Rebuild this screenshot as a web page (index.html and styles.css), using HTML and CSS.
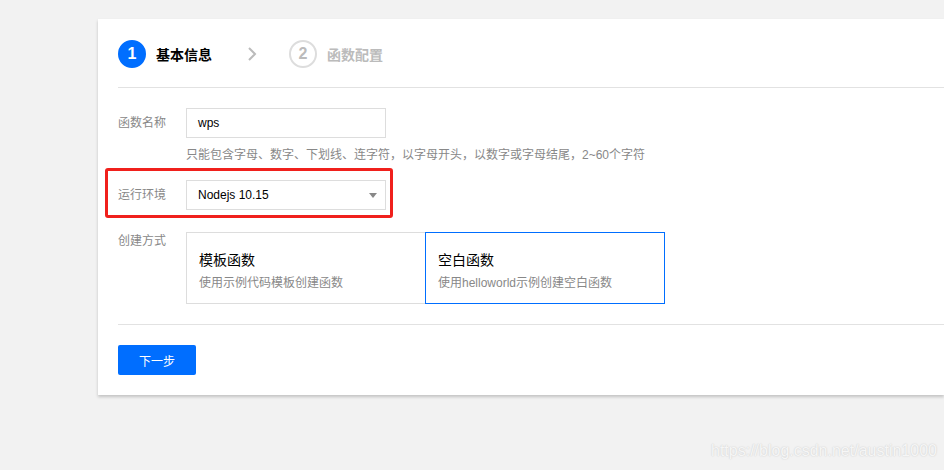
FILE: index.html
```html
<!DOCTYPE html>
<html lang="zh">
<head>
<meta charset="utf-8">
<link rel="stylesheet" href="styles.css">
</head>
<body>
<div class="page">
  <div class="panel">
    <div class="steps">
      <div class="step active"><span class="num">1</span><span class="step-text">基本信息</span></div>
      <svg class="chev" width="10" height="16" viewBox="0 0 10 16"><path d="M2 2 L8 8 L2 14" fill="none" stroke="#bbb" stroke-width="2"/></svg>
      <div class="step"><span class="num">2</span><span class="step-text">函数配置</span></div>
    </div>
    <div class="divider"></div>
    <div class="form">
      <div class="row">
        <div class="label">函数名称</div>
        <div class="field">
          <div class="input">wps</div>
          <div class="hint">只能包含字母、数字、下划线、连字符，以字母开头，以数字或字母结尾，2~60个字符</div>
        </div>
      </div>
      <div class="row row-env">
        <div class="label">运行环境</div>
        <div class="field">
          <div class="input select">Nodejs 10.15<span class="arrow"></span></div>
        </div>
        <div class="mark"></div>
      </div>
      <div class="row row-mode">
        <div class="label label-top">创建方式</div>
        <div class="field">
          <div class="options">
            <div class="option">
              <div class="opt-title">模板函数</div>
              <div class="opt-desc">使用示例代码模板创建函数</div>
            </div>
            <div class="option selected">
              <div class="opt-title">空白函数</div>
              <div class="opt-desc">使用helloworld示例创建空白函数</div>
            </div>
          </div>
        </div>
      </div>
    </div>
    <div class="divider divider-bottom"></div>
    <button class="btn">下一步</button>
  </div>
  <div class="watermark">https://blog.csdn.net/austin1000</div>
</div>
</body>
</html>
```
FILE: styles.css
```css
html, body {
  margin: 0;
  padding: 0;
  background: #f2f2f2;
  overflow: hidden;
}
body {
  width: 944px;
  height: 470px;
  font-family: "Liberation Sans", "Noto Sans CJK SC", sans-serif;
  font-size: 12px;
  color: #000;
}
.page {
  position: relative;
  width: 944px;
  height: 470px;
  padding-top: 19px;
  box-sizing: border-box;
  overflow: hidden;
}
.panel {
  margin-left: 98px;
  background: #fff;
  padding: 21px 0 20px 20px;
  box-sizing: border-box;
  box-shadow: 0 2px 3px rgba(0, 0, 0, 0.2);
}
.steps {
  display: flex;
  align-items: center;
  height: 28px;
}
.step {
  display: flex;
  align-items: center;
}
.num {
  width: 28px;
  height: 28px;
  border-radius: 50%;
  box-sizing: border-box;
  border: 2px solid #ddd;
  color: #bbb;
  font-weight: bold;
  font-size: 16px;
  display: flex;
  align-items: center;
  justify-content: center;
}
.step.active .num {
  background: #006eff;
  border-color: #006eff;
  color: #fff;
}
.step-text {
  margin-left: 10px;
  font-size: 14px;
  font-weight: bold;
  color: #bbb;
}
.step.active .step-text {
  color: #000;
}
.chev {
  margin: 0 32px 0 35px;
}
.divider {
  height: 1px;
  background: #e2e2e2;
  margin: 19px 0 20px 0;
}
.divider-bottom {
  margin-top: 20px;
  margin-bottom: 20px;
}
.form {
  display: flex;
  flex-direction: column;
}
.row {
  display: flex;
  position: relative;
}
.row-env {
  margin-top: 16px;
}
.row-mode {
  margin-top: 22px;
}
.label {
  width: 68px;
  color: #888;
  line-height: 30px;
  flex: none;
}
.label-top {
  line-height: 18px;
}
.input {
  width: 200px;
  height: 30px;
  box-sizing: border-box;
  border: 1px solid #ddd;
  padding-left: 11px;
  line-height: 28px;
  position: relative;
}
.select .arrow {
  position: absolute;
  right: 8px;
  top: 12px;
  width: 0;
  height: 0;
  border-left: 4px solid transparent;
  border-right: 4px solid transparent;
  border-top: 5px solid #888;
}
.hint {
  margin-top: 8px;
  color: #888;
  line-height: 18px;
}
.mark {
  position: absolute;
  left: -13px;
  top: -12px;
  width: 288px;
  height: 50px;
  box-sizing: border-box;
  border: 3px solid #f0201c;
  border-radius: 3px;
}
.options {
  display: flex;
}
.option {
  width: 240px;
  height: 72px;
  box-sizing: border-box;
  border: 1px solid #ddd;
  padding: 17px 12px 0 12px;
}
.option + .option {
  margin-left: -1px;
}
.option.selected {
  border-color: #006eff;
}
.opt-title {
  font-size: 14px;
  line-height: 20px;
  color: #000;
}
.opt-desc {
  margin-top: 4px;
  color: #888;
  line-height: 18px;
}
.btn {
  display: block;
  width: 78px;
  height: 30px;
  border: none;
  border-radius: 2px;
  background: #006eff;
  color: #fff;
  font-family: "Liberation Sans", "Noto Sans CJK SC", sans-serif;
  font-size: 12px;
  padding: 0;
}
.watermark {
  position: absolute;
  left: 711px;
  top: 442px;
  font-family: "Liberation Sans", sans-serif;
  font-size: 16px;
  color: #f6f6f6;
  text-shadow: 0 0 1px #d0d0d0, 0 0 2px #dadada;
}
```
